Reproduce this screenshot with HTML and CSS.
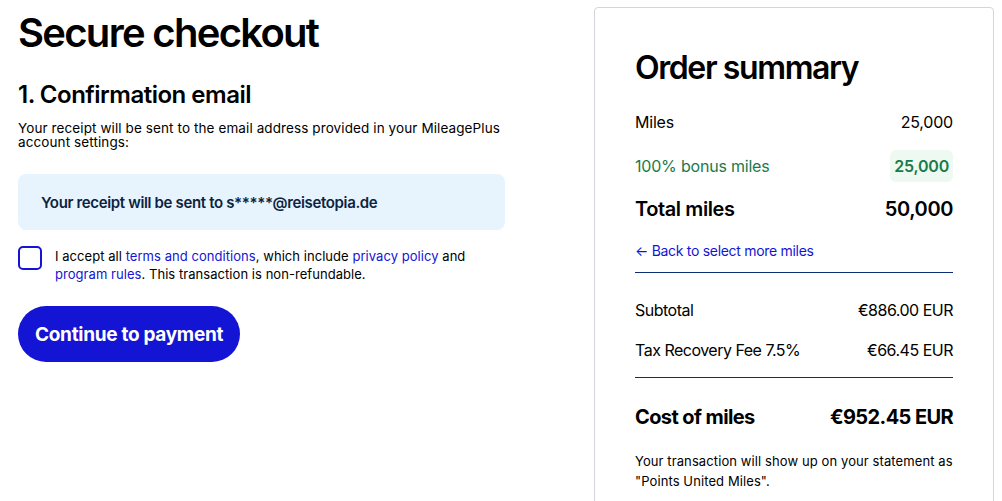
FILE: index.html
```html
<!DOCTYPE html>
<html lang="en">
<head>
<meta charset="UTF-8">
<meta name="viewport" content="width=device-width, initial-scale=1.0">
<title>Secure checkout</title>
<link rel="stylesheet" href="styles.css">
</head>
<body>
    <div class="page">
        <!-- Checkout form -->
        <main class="checkout">
            <h1 class="page-title">Secure checkout</h1>
            <h2 class="step-title">1. Confirmation email</h2>
            <p class="step-note">Your receipt will be sent to the email address provided in your MileagePlus account settings:</p>
            <div class="email-box">Your receipt will be sent to s*****@reisetopia.de</div>
            <label class="terms">
                <span class="checkbox"></span>
                <span class="terms-text">I accept all <a href="#">terms and conditions</a>, which include <a href="#">privacy policy</a> and <a href="#">program rules</a>. This transaction is non-refundable.</span>
            </label>
            <button class="pay-button">Continue to payment</button>
        </main>

        <!-- Order summary -->
        <aside class="summary">
            <h2 class="summary-title">Order summary</h2>
            <div class="row">
                <span>Miles</span>
                <span>25,000</span>
            </div>
            <div class="row bonus">
                <span>100% bonus miles</span>
                <span class="bonus-badge">25,000</span>
            </div>
            <div class="row total">
                <span>Total miles</span>
                <span>50,000</span>
            </div>
            <a href="#" class="back-link">&larr; Back to select more miles</a>
            <hr class="divider">
            <div class="row price">
                <span>Subtotal</span>
                <span>&euro;886.00 EUR</span>
            </div>
            <div class="row price">
                <span>Tax Recovery Fee 7.5%</span>
                <span>&euro;66.45 EUR</span>
            </div>
            <hr class="divider">
            <div class="row cost">
                <span>Cost of miles</span>
                <span>&euro;952.45 EUR</span>
            </div>
            <p class="statement-note">Your transaction will show up on your statement as "Points United Miles".</p>
        </aside>
    </div>
</body>
</html>
```

FILE: styles.css
```css
/* General Reset */
* {
    margin: 0;
    padding: 0;
    box-sizing: border-box;
}

body {
    height: 100vh;
    width: 100%;
    font-family: Inter, "Liberation Sans", sans-serif;
    color: #000;
    background-color: #fff;
    overflow: hidden;
}

.page {
    display: flex;
    align-items: flex-start;
    gap: 89px;
    padding: 7px 0 0 18px;
}

/* Checkout column */
.checkout {
    width: 487px;
    display: flex;
    flex-direction: column;
    align-items: flex-start;
}

.page-title {
    font-size: 40px;
    font-weight: 600;
    letter-spacing: -1.7px;
    line-height: 52px;
}

.step-title {
    margin-top: 21px;
    font-size: 24px;
    font-weight: 600;
    letter-spacing: -0.5px;
    line-height: 30px;
}

.step-note {
    margin-top: 11px;
    font-size: 13.5px;
    line-height: 14px;
    letter-spacing: 0.1px;
}

.email-box {
    margin-top: 25px;
    width: 100%;
    height: 56px;
    display: flex;
    align-items: center;
    padding: 0 23px;
    background-color: #e8f4fd;
    border-radius: 8px;
    font-size: 15px;
    font-weight: 600;
    letter-spacing: -0.35px;
    color: #0c2340;
}

.terms {
    margin-top: 16px;
    display: flex;
    gap: 13px;
    align-items: flex-start;
    font-size: 13px;
    line-height: 18px;
}

.checkbox {
    flex: none;
    width: 24px;
    height: 24px;
    border: 2px solid #1414d4;
    border-radius: 5px;
}

.terms-text {
    padding-top: 1px;
    letter-spacing: 0.05px;
}

.terms-text a {
    color: #1414d4;
    text-decoration: none;
}

.pay-button {
    margin-top: 23px;
    height: 56px;
    padding: 0 17px;
    border: none;
    border-radius: 28px;
    background-color: #1414d4;
    color: #fff;
    font-family: inherit;
    font-size: 19px;
    font-weight: 700;
    letter-spacing: -0.3px;
    cursor: pointer;
}

/* Order summary card */
.summary {
    width: 400px;
    height: 520px;
    padding: 40px 40px 0;
    border: 1px solid #d4d4dc;
    border-radius: 4px;
}

.summary-title {
    font-size: 32px;
    font-weight: 600;
    letter-spacing: -1.4px;
    line-height: 40px;
    margin-bottom: 18px;
}

.row {
    display: flex;
    justify-content: space-between;
    align-items: center;
    font-size: 16px;
    letter-spacing: -0.2px;
    height: 32px;
    margin-bottom: 12px;
}

.bonus {
    color: #1a7a4c;
}

.bonus-badge {
    padding: 6px 4px;
    background-color: #eef9f1;
    border-radius: 6px;
    font-weight: 600;
}

.total {
    font-size: 20px;
    font-weight: 600;
    letter-spacing: -0.4px;
    height: 30px;
    margin-bottom: 18px;
}

.back-link {
    display: block;
    font-size: 14px;
    color: #1414d4;
    text-decoration: none;
    letter-spacing: -0.3px;
    line-height: 18px;
}

.divider {
    margin: 12px 0 21px;
    border: none;
    border-top: 1px solid #0c2d7a;
}

.price {
    letter-spacing: -0.5px;
    margin-bottom: 8px;
}

.price + .divider {
    margin-top: 11px;
}

.cost {
    margin-top: 23px;
    font-size: 20px;
    font-weight: 700;
    letter-spacing: -0.6px;
}

.statement-note {
    margin-top: 18px;
    font-size: 13px;
    line-height: 20px;
    letter-spacing: 0.1px;
}
```
